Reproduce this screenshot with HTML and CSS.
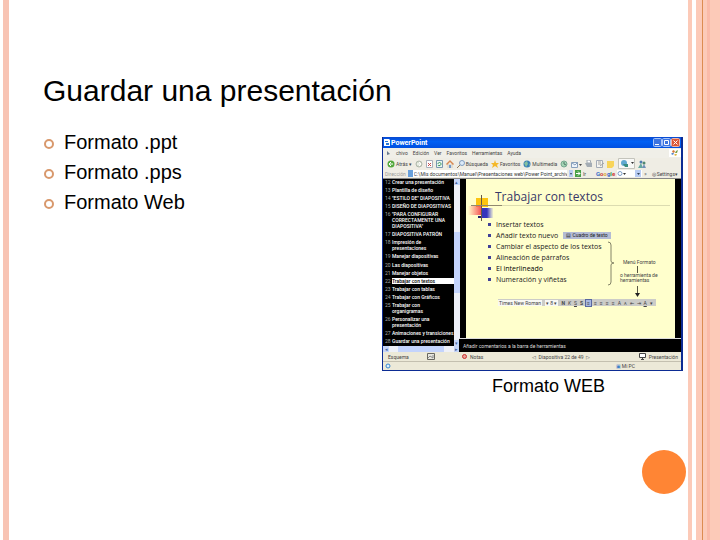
FILE: index.html
```html
<!DOCTYPE html>
<html lang="es">
<head>
    <meta charset="UTF-8">
    <meta name="viewport" content="width=device-width, initial-scale=1.0">
    <title>Guardar una presentación</title>
    <link rel="stylesheet" href="styles.css">
</head>
<body>
    <div class="stripe-left"></div>
    <main>
        <h1>Guardar una presentación</h1>
        <div class="columns">
            <ul class="formats">
                <li>Formato .ppt</li>
                <li>Formato .pps</li>
                <li>Formato Web</li>
            </ul>
            <figure>
                <div class="window">
                    <div class="titlebar">
                        <svg width="6" height="7" viewBox="0 0 6 7"><path d="M0 0h5l1 1v6H0z" fill="#fff"/><path d="M1 2h3v1H1zM2 4h3v2H2z" fill="#2878d8"/></svg>
                        <span class="name">PowerPoint</span>
                        <svg width="27" height="9" viewBox="0 0 27 9">
                            <rect x="0.5" y="0.5" width="8" height="8" rx="1" fill="#3c74e0" stroke="#a8c4f8"/><path d="M2 6h4v1H2z" fill="#fff"/>
                            <rect x="9.5" y="0.5" width="8" height="8" rx="1" fill="#3c74e0" stroke="#a8c4f8"/><path d="M11.500 2.500h4v4h-4z" fill="none" stroke="#fff"/>
                            <rect x="18.500" y="0.5" width="8" height="8" rx="1" fill="#dc5838" stroke="#f0b8a8"/><path d="M20.500 2.500l4 4m0-4l-4 4" stroke="#fff"/>
                        </svg>
                    </div>
                    <div class="menubar">
                        <svg width="5" height="6" viewBox="0 0 5 6"><path d="M1 1l3 3-3 1z" fill="#68788c"/></svg>
                        <span>chivo</span><span>Edición</span><span>Ver</span><span>Favoritos</span><span>Herramientas</span><span>Ayuda</span>
                        <svg class="flag" width="12" height="8" viewBox="0 0 12 8"><rect width="12" height="8" fill="#fff"/><path d="M4 1l2 1-1 2-2-1z" fill="#d87838"/><path d="M7 2l2-1-1 3-2 0z" fill="#78a048"/><path d="M3 4l2 0-1 2-2-1z" fill="#5888c8"/><path d="M6 5h2l-1 2-2-1z" fill="#e0b840"/></svg>
                    </div>
                    <div class="toolbar">
                        <button><svg width="8" height="8" viewBox="0 0 8 8"><circle cx="4" cy="4" r="3.500" fill="#54a83c"/><path d="M6 4H2m2-2L2 4l2 2" stroke="#fff" fill="none"/></svg>Atrás ▾</button>
                        <svg width="8" height="8" viewBox="0 0 8 8"><circle cx="4" cy="4" r="3" fill="#d4dccc" stroke="#b0b8ac"/><path d="M2 4h4M4 2l2 2-2 2" stroke="#fff" fill="none"/></svg>
                        <svg width="7" height="8" viewBox="0 0 7 8"><path d="M.5.5h6v7h-6z" fill="#fff" stroke="#a8b0bc"/><path d="M2 3l3 3m0-3L2 6" stroke="#c84848"/></svg>
                        <svg width="7" height="8" viewBox="0 0 7 8"><path d="M.5.5h6v7h-6z" fill="#e8f4f0" stroke="#7898b0"/><path d="M2 4c0-2 3-2 3 0M5 4c0 2-3 2-3 1" stroke="#38985c" fill="none"/></svg>
                        <svg width="8" height="8" viewBox="0 0 8 8"><path d="M1 4v4h6V4z" fill="#e0dcd0"/><path d="M0 4l4-4 4 4-1 1-3-3-3 3z" fill="#d88850"/><path d="M3 5h2v3H3z" fill="#7098cc"/></svg>
                        <button><svg width="8" height="8" viewBox="0 0 8 8"><circle cx="5" cy="3" r="2.500" fill="#dceaf8" stroke="#809cc0"/><path d="M3 5L0 8" stroke="#907858"/></svg>Búsqueda</button>
                        <button><svg width="8" height="8" viewBox="0 0 8 8"><path d="M4 0l1 3h3L6 5l1 3-3-2-3 2 1-3-2-2h3z" fill="#f4b828"/></svg>Favoritos</button>
                        <button><svg width="8" height="8" viewBox="0 0 8 8"><circle cx="4" cy="4" r="3.500" fill="#3880b8"/><path d="M1 3l3-2 1 3-2 3zM6 3l1 2-1 1z" fill="#84c0a0"/></svg>Multimedia</button>
                        <svg width="8" height="8" viewBox="0 0 8 8"><circle cx="4" cy="4" r="3" fill="#a4d4b4" stroke="#78a890"/><path d="M4 2v2l2 1" stroke="#507868" fill="none"/></svg>
                        <svg width="11" height="8" viewBox="0 0 11 8"><path d="M.5 2.500h6v5h-6z" fill="#eef4fa" stroke="#88a0bc"/><path d="M1 3l3 2 3-3" stroke="#88a0bc" fill="none"/><path d="M8 4h3L9.500 6z" fill="#444"/></svg>
                        <svg width="8" height="8" viewBox="0 0 8 8"><path d="M2 0h3l1 3H2z" fill="#fff" stroke="#a0a8b0"/><path d="M0 3h7v4H2z" fill="#a4acb4"/></svg>
                        <svg width="8" height="8" viewBox="0 0 8 8"><path d="M.5.5h6v7h-6z" fill="#f4f4f0" stroke="#a4acb8"/><path d="M2 2h3M2 4h3m-1 2l4-3" stroke="#a4a4a4"/></svg>
                        <svg width="8" height="8" viewBox="0 0 8 8"><path d="M0 1h7v5L5 8H0z" fill="#f8d458"/></svg>
                        <svg class="pressed" width="17" height="11" viewBox="0 0 17 11"><path d="M.5.5h16v10H.5z" fill="#f8f8f6" stroke="#c4c4bc"/><circle cx="6" cy="5" r="3" fill="#60a8d0"/><path d="M5 6h5v3H7z" fill="#388c80"/><path d="M13 4h3l-1.500 2z" fill="#333"/></svg>
                        <svg width="8" height="8" viewBox="0 0 8 8"><circle cx="3" cy="2" r="1.500" fill="#507cb0"/><path d="M0 8l3-5 2 5z" fill="#64a8a0"/><circle cx="6" cy="3" r="1.500" fill="#508870"/><path d="M4 8l2-4 2 4z" fill="#7090b8"/></svg>
                    </div>
                    <div class="address">
                        <label for="url">Dirección</label>
                        <input id="url" type="text" value="C:\Mis documentos\Manuel\Presentaciones web\Power Point_archivos\f...">
                        <svg width="12" height="7" viewBox="0 0 12 7"><path d="M0 0h4v7H0z" fill="#b8ccf4"/><path d="M1 3h2L2 5z" fill="#345"/><path d="M6 0h6v7H6z" fill="#48a048"/><path d="M7 3.500h4m-2-2l2 2-2 2" stroke="#fff" fill="none"/></svg>
                        <span>Ir</span>
                        <b class="google"><i>G</i><i>o</i><i>o</i><i>g</i><i>l</i><i>e</i></b>
                        <svg width="25" height="7" viewBox="0 0 25 7"><path d="M0 0h25v7H0z" fill="#fff"/><circle cx="3" cy="3.500" r="2" fill="#fff" stroke="#7c9cc8"/><path d="M6 3h3L7.500 5z" fill="#333"/><path d="M18 0h6v7h-6z" fill="#b8ccf4"/><path d="M20 3h3l-1.500 2z" fill="#345"/></svg>
                        <span class="more">»</span>
                        <span class="settings">◎ Settings▾</span>
                    </div>
                    <div class="panes">
                        <div class="outline">
                            <ol start="12">
                                <li><span>12</span><a href="#slide">Crear una presentación</a></li>
                                <li><span>13</span><a href="#slide">Plantilla de diseño</a></li>
                                <li><span>14</span><a href="#slide">"ESTILO DE" DIAPOSITIVA</a></li>
                                <li><span>15</span><a href="#slide">DISEÑO DE DIAPOSITIVAS</a></li>
                                <li><span>16</span><a href="#slide">"PARA CONFIGURAR<br>CORRECTAMENTE UNA<br>DIAPOSITIVA"</a></li>
                                <li><span>17</span><a href="#slide">DIAPOSITIVA PATRÓN</a></li>
                                <li><span>18</span><a href="#slide">Impresión de<br>presentaciones</a></li>
                                <li><span>19</span><a href="#slide">Manejar diapositivas</a></li>
                                <li><span>20</span><a href="#slide">Las diapositivas</a></li>
                                <li><span>21</span><a href="#slide">Manejar objetos</a></li>
                                <li class="current"><span>22</span><a href="#slide">Trabajar con textos</a></li>
                                <li><span>23</span><a href="#slide">Trabajar con tablas</a></li>
                                <li><span>24</span><a href="#slide">Trabajar con Gráficos</a></li>
                                <li><span>25</span><a href="#slide">Trabajar con<br>organigramas</a></li>
                                <li><span>26</span><a href="#slide">Personalizar una<br>presentación</a></li>
                                <li><span>27</span><a href="#slide">Animaciones y transiciones</a></li>
                                <li><span>28</span><a href="#slide">Guardar una presentación</a></li>
                            </ol>
                            <div class="vscroll"><i>▴</i><b></b><i>▾</i></div>
                            <div class="hscroll"><i>◂</i><b></b><i>▸</i></div>
                        </div>
                        <div class="right-pane">
                            <div class="slide" id="slide">
                                <svg class="drawing" width="209" height="158" viewBox="0 0 209 158">
                                    <defs>
                                        <linearGradient id="red"><stop offset="0" stop-color="#ff5858" stop-opacity="0"/><stop offset="1" stop-color="#f45858"/></linearGradient>
                                        <linearGradient id="blue"><stop offset="0.5" stop-color="#3434bc"/><stop offset="1" stop-color="#5858d8" stop-opacity="0.1"/></linearGradient>
                                    </defs>
                                    <rect x="10" y="19" width="12" height="9" fill="#fcc410"/>
                                    <rect x="2" y="27" width="13" height="9" fill="url(#red)"/>
                                    <rect x="15" y="29" width="12" height="10" fill="url(#blue)"/>
                                    <path d="M12 37h4v2h-4z" fill="#202070"/>
                                    <path d="M15.500 16v26" stroke="#645848"/>
                                    <path d="M5 26.500h31" stroke="#908870"/>
                                    <path d="M36 26.500h168" stroke="#dcdcb0"/>
                                    <path d="M142 63q3 0 3 3v16q0 2 3 2-3 0-3 2v17q0 3-3 3" fill="none" stroke="#848468"/>
                                    <path d="M171.500 87v7m0 13v9" stroke="#585844"/>
                                    <path d="M169 114h5l-2.500 4z" fill="#222"/>
                                </svg>
                                <h2>Trabajar con textos</h2>
                                <ul>
                                    <li>Insertar textos</li>
                                    <li>Añadir texto nuevo <button>▤ Cuadro de texto</button></li>
                                    <li>Cambiar el aspecto de los textos</li>
                                    <li>Alineación de párrafos</li>
                                    <li class="dark">El interlineado</li>
                                    <li>Numeración y viñetas</li>
                                </ul>
                                <p class="note">Menú Formato</p>
                                <p class="note second">o herramienta de<br>herramientas</p>
                                <div class="format">
                                    <span class="font">Times New Roman</span><span class="size">▾ 8 ▾</span>
                                    <b>N</b><i>K</i><u>S</u><b>S</b><em>≡</em><span>≡</span><span>≡</span><span>≡</span><span>≡</span><span>A</span><span>ᴀ</span><span>⇤</span><span>⇥</span><u>A</u><span>▾</span>
                                </div>
                            </div>
                            <div class="notes">Añadir comentarios a la barra de herramientas</div>
                        </div>
                    </div>
                    <div class="controls">
                        <span class="scheme">Esquema</span>
                        <svg width="8" height="7" viewBox="0 0 8 7"><path d="M.5.5h7v6h-7z" fill="#e8e8e0" stroke="#686860"/><path d="M1 5l2-2 3 2V2" stroke="#888" fill="none"/></svg>
                        <svg class="stop" width="5" height="5" viewBox="0 0 5 5"><circle cx="2.500" cy="2.500" r="2" fill="#e8a098" stroke="#c83030"/></svg>
                        <span>Notas</span>
                        <span class="counter">◁ &nbsp;Diapositiva 22 de 49 &nbsp;▷</span>
                        <svg width="7" height="7" viewBox="0 0 7 7"><path d="M.5.5h6v4h-6zM2 6.500h3M3.500 4v2" fill="#fff" stroke="#444"/></svg>
                        <span>Presentación</span>
                    </div>
                    <div class="statusbar">
                        <svg width="6" height="6" viewBox="0 0 6 6"><circle cx="3" cy="3" r="2" fill="#e0f0fc" stroke="#3888d0"/></svg>
                        <span class="pc">Mi PC</span>
                    </div>
                </div>
                <figcaption>Formato WEB</figcaption>
            </figure>
        </div>
    </main>
    <div class="stripes-right"></div>
    <div class="dot"></div>
</body>
</html>
```

FILE: styles.css
```css
* {
    box-sizing: border-box;
}
body {
    margin: 0;
    min-height: 100vh;
    display: flex;
    position: relative;
    background: #fff;
    color: #000;
    font-family: "Liberation Sans", Arial, sans-serif;
}
h1, h2, p, ul, ol, figure {
    margin: 0;
    padding: 0;
    font-weight: normal;
}
ul, ol {
    list-style: none;
}
svg {
    flex: none;
    display: block;
}
.stripe-left {
    width: 6px;
    margin-left: 3px;
    background: #f8c4b4;
}
.stripes-right {
    width: 32px;
    background: linear-gradient(to right,
        #fccab8 0 4px, #fff 4px 8px, #fccab8 8px 14px, #dc8c50 14px 15px,
        #fccab8 15px 19px, #fabaa8 19px 22px, #fccab8 22px);
}
.dot {
    position: absolute;
    right: 34px;
    bottom: 46px;
    width: 44px;
    height: 44px;
    border-radius: 50%;
    background: #ff8534;
}
main {
    flex: 1;
    padding: 72px 5px 0 34px;
}
h1 {
    font-size: 30px;
    line-height: 38px;
    margin-bottom: 17px;
}
.columns {
    display: flex;
    justify-content: space-between;
}
.formats li {
    display: flex;
    align-items: center;
    gap: 10px;
    padding-left: 1px;
    font-size: 20px;
    line-height: 30px;
}
.formats li::before {
    content: "";
    width: 6px;
    height: 6px;
    margin-top: 3px;
    border: 2px solid #d8986c;
    border-radius: 50%;
}
figure {
    width: 301px;
    margin-top: 10px;
}
figcaption {
    font-size: 18px;
    line-height: 22px;
    margin-top: 4px;
    padding-left: 32px;
    text-align: center;
}

/* browser window */
.window {
    border: 1px solid #0c2c94;
    border-width: 0 2px 1px 1px;
    background: #ece9d8;
    font-family: Roboto, "Noto Sans", sans-serif;
    font-size: 5px;
    line-height: 6px;
    color: #444;
    white-space: nowrap;
}
.window button {
    display: flex;
    align-items: center;
    gap: 1px;
    padding: 0;
    border: none;
    background: none;
    font: inherit;
    color: inherit;
}
.titlebar {
    display: flex;
    align-items: center;
    gap: 1px;
    height: 11px;
    padding: 0 1px;
    background: linear-gradient(#0848d0, #0060f4 40%, #0050e0);
    color: #fff;
}
.name {
    flex: 1;
    font-size: 7px;
    font-weight: bold;
}
.menubar {
    display: flex;
    align-items: center;
    gap: 5px;
    height: 10px;
    padding-left: 3px;
    background: #f0efe8;
}
.flag {
    margin-left: auto;
}
.toolbar {
    display: flex;
    align-items: center;
    justify-content: space-between;
    height: 11px;
    padding: 0 35px 0 4px;
    background: #efede4;
}
.address {
    display: flex;
    align-items: center;
    gap: 2px;
    height: 10px;
    padding: 0 3px 0 2px;
    border-bottom: 1px solid #888;
    background: #efede4;
}
.address label {
    color: #999;
}
.address input {
    flex: 1;
    min-width: 0;
    height: 7px;
    padding: 0 0 0 6px;
    border: none;
    background: linear-gradient(to right, #68a0dc 5px, #fff 5px);
    font: inherit;
    color: #333;
}
.google {
    margin-left: 8px;
    font-size: 6px;
}
.google i {
    font-style: normal;
    color: #3868c8;
}
.google i:nth-child(2), .google i:nth-child(6) {
    color: #d04038;
}
.google i:nth-child(3) {
    color: #d8a830;
}
.google i:nth-child(5) {
    color: #40a050;
}
.settings {
    margin-left: 3px;
}
.panes {
    display: flex;
    height: 173px;
    background: #000;
}
.outline {
    display: grid;
    grid-template-columns: 1fr 6px;
    grid-template-rows: 1fr 6px;
    width: 76px;
    border-right: 2px solid #dcdcd4;
    background: #000;
}
.outline ol {
    display: flex;
    flex-direction: column;
    justify-content: space-between;
    padding-bottom: 2px;
}
.outline li {
    display: flex;
    gap: 1px;
    padding-left: 2px;
    color: #aaa;
}
.outline li span {
    width: 6px;
}
.outline a {
    flex: 1;
    min-width: 0;
    color: #fff;
    font-weight: 500;
    text-decoration: none;
}
.outline .current a {
    background: #fff;
    color: #000;
}
.vscroll, .hscroll {
    display: flex;
    justify-content: space-between;
    background: #eef0f8;
    color: #4464a0;
}
.vscroll {
    flex-direction: column;
}
.vscroll i, .hscroll i {
    width: 6px;
    height: 6px;
    background: #c4d4f8;
    font-style: normal;
    text-align: center;
}
.vscroll b {
    height: 61px;
    background: #c4d4fc;
}
.hscroll {
    grid-column: 1 / 3;
}
.hscroll b {
    width: 46px;
    background: #c4d4fc;
}
.right-pane {
    flex: 1;
    display: flex;
    flex-direction: column;
}
.slide {
    position: relative;
    flex: 1;
    margin: 0 6px 0 7px;
    padding: 9px 0 0 29px;
    background: #ffffcc;
}
.drawing {
    position: absolute;
    left: 0;
    top: 0;
}
.slide h2, .slide ul {
    font-family: "Open Sans", "Noto Sans", sans-serif;
}
.slide h2 {
    font-size: 12px;
    line-height: 18px;
    margin-bottom: 13px;
    color: #383868;
}
.slide ul {
    margin-left: -7px;
}
.slide li {
    display: flex;
    align-items: center;
    gap: 5px;
    font-size: 7px;
    line-height: 11px;
    color: #222;
}
.slide li::before {
    content: "";
    width: 3px;
    height: 3px;
    background: #404098;
}
.slide .dark {
    color: #000;
}
.slide li button {
    height: 7px;
    padding: 0 3px;
    background: #b4bcd4;
    font-family: Roboto, sans-serif;
    font-size: 5px;
    line-height: 7px;
}
.note {
    position: absolute;
    left: 157px;
    top: 80px;
}
.second {
    left: 154px;
    top: 94px;
    line-height: 5px;
}
.format {
    display: flex;
    justify-content: space-between;
    align-items: center;
    width: 158px;
    height: 7px;
    margin: 14px 0 0 3px;
    padding-right: 3px;
    background: #ccccc8;
}
.format .font, .format .size {
    padding: 0 1px;
    background: #f8f8f4;
}
.format em {
    padding: 0 1px;
    background: #a8b8e0;
    font-style: normal;
    outline: 1px solid #5868a0;
}
.notes {
    height: 14px;
    padding: 2px 4px 0;
    border-top: 1px solid #ddd;
    background: #000;
    color: #ddd;
    line-height: 10px;
}
.controls {
    display: flex;
    align-items: center;
    gap: 3px;
    height: 10px;
    padding: 0 3px 0 5px;
    border-bottom: 1px solid #c4c0b0;
}
.scheme {
    width: 36px;
}
.stop {
    margin-left: 24px;
}
.counter {
    margin: 0 auto;
}
.statusbar {
    display: flex;
    align-items: center;
    height: 8px;
    padding: 0 46px 0 2px;
}
.pc {
    margin-left: auto;
}
.pc::before {
    content: "▣ ";
    color: #3c80c8;
}
```
